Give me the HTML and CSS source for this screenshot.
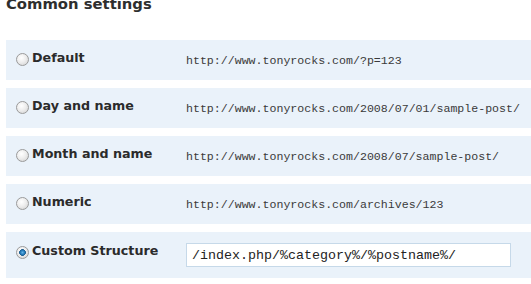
FILE: index.html
```html
<!DOCTYPE html>
<html>
<head>
<meta charset="utf-8">
<link rel="stylesheet" href="styles.css">
</head>
<body>
<div class="page">
  <h3 class="title">Common settings</h3>
  <div class="options">
    <div class="row">
      <label class="opt"><span class="radio"></span>Default</label>
      <code class="url">http://www.tonyrocks.com/?p=123</code>
    </div>
    <div class="row">
      <label class="opt"><span class="radio"></span>Day and name</label>
      <code class="url">http://www.tonyrocks.com/2008/07/01/sample-post/</code>
    </div>
    <div class="row">
      <label class="opt"><span class="radio"></span>Month and name</label>
      <code class="url">http://www.tonyrocks.com/2008/07/sample-post/</code>
    </div>
    <div class="row">
      <label class="opt"><span class="radio"></span>Numeric</label>
      <code class="url">http://www.tonyrocks.com/archives/123</code>
    </div>
    <div class="row row-custom">
      <label class="opt"><span class="radio checked"></span>Custom Structure</label>
      <input class="structure" type="text" value="/index.php/%category%/%postname%/">
    </div>
  </div>
</div>
</body>
</html>
```

FILE: styles.css
```css
html, body {
  margin: 0;
  padding: 0;
  background: #ffffff;
  overflow: hidden;
}

.page {
  padding-left: 6px;
  font-family: "DejaVu Sans", Verdana, sans-serif;
  color: #333333;
}

.title {
  margin: -5px 0 0 0;
  font-size: 14.8px;
  line-height: 18px;
  font-weight: bold;
  color: #2e2e2e;
}

.options {
  margin-top: 27px;
  display: flex;
  flex-direction: column;
  gap: 8px;
}

.row {
  display: grid;
  grid-template-columns: 170px 1fr;
  height: 40px;
  box-sizing: border-box;
  padding: 10px 0 0 10px;
  background: #eaf2fa;
}

.row-custom {
  height: 46px;
  padding-top: 11px;
}

.opt {
  display: flex;
  align-items: flex-start;
  font-size: 12.7px;
  line-height: 16px;
  font-weight: bold;
  color: #2b2b2b;
  white-space: nowrap;
}

.radio {
  width: 13px;
  height: 13px;
  box-sizing: border-box;
  margin: 3px 3px 0 0;
  border-radius: 50%;
  border: 1px solid #9a9a9a;
  background: radial-gradient(circle at 40% 35%, #ffffff 0%, #eeeeee 45%, #cfcfcf 100%);
  flex: none;
}

.radio.checked {
  background:
    radial-gradient(circle at 50% 50%, #5fb3e8 0%, #1b6fae 32%, #1b5b8c 40%, rgba(0,0,0,0) 44%),
    radial-gradient(circle at 40% 35%, #ffffff 0%, #eeeeee 45%, #cfcfcf 100%);
}

.url {
  padding-top: 3px;
  font-family: "Liberation Mono", "Courier New", monospace;
  font-size: 11.6px;
  line-height: 16px;
  color: #3a3a3a;
  white-space: nowrap;
}

.structure {
  width: 325px;
  height: 24px;
  box-sizing: border-box;
  margin: 0;
  padding: 0 5px;
  border: 1px solid #c6d9e9;
  background: #ffffff;
  font-family: "Liberation Mono", "Courier New", monospace;
  font-size: 13.33px;
  color: #222222;
  outline: none;
}
```
